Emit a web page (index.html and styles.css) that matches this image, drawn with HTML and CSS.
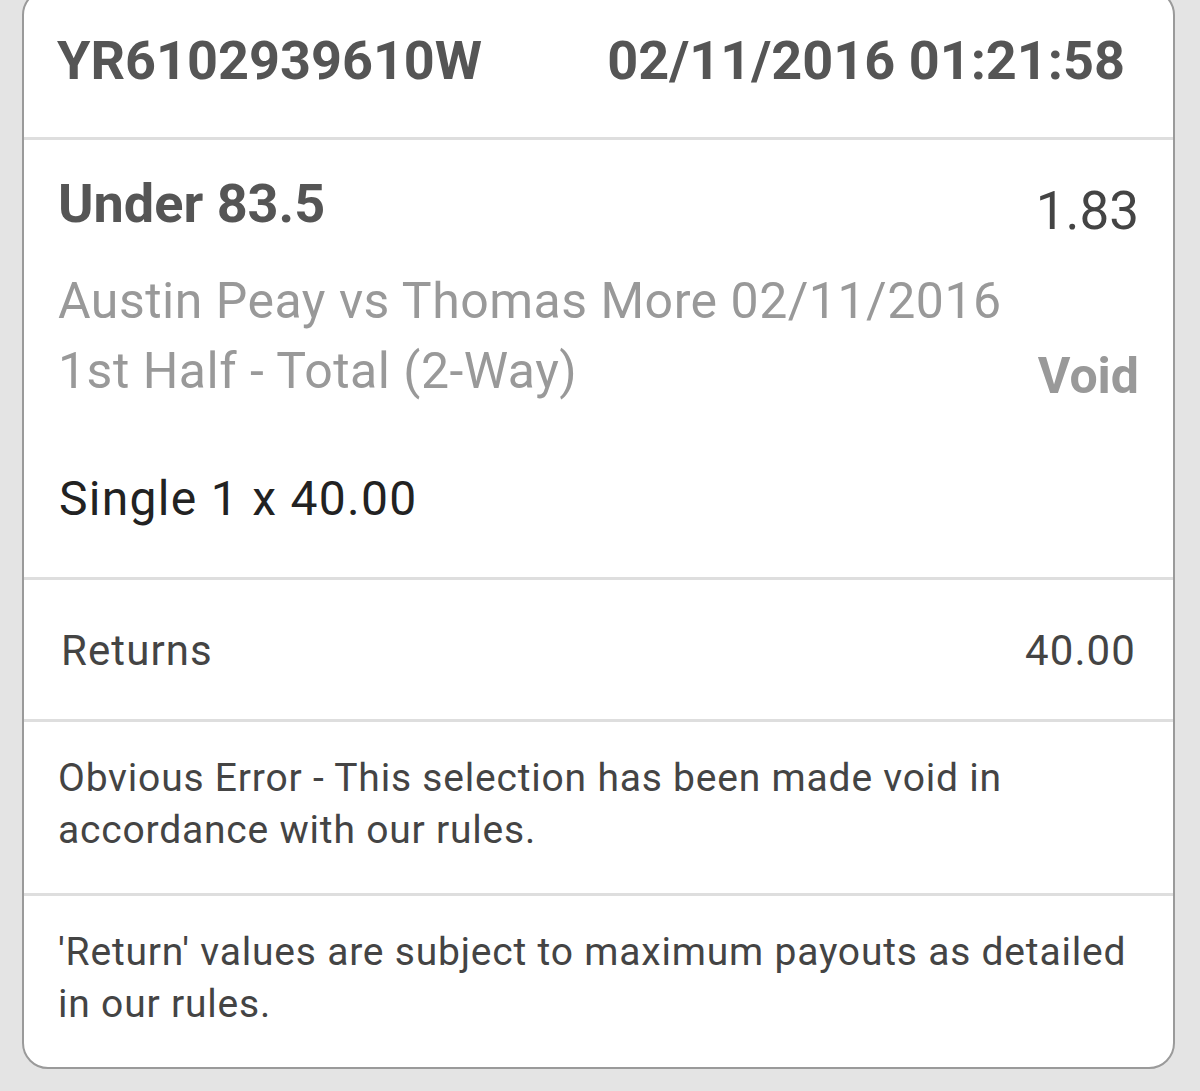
FILE: index.html
```html
<!DOCTYPE html>
<html lang="en">
<head>
<meta charset="UTF-8">
<meta name="viewport" content="width=device-width, initial-scale=1.0">
<title>Bet Receipt</title>
<link rel="stylesheet" href="styles.css">
</head>
<body>

<div class="receipt">
    <div class="receipt-head">
        <span class="bet-ref">YR6102939610W</span>
        <span class="bet-time">02/11/2016 01:21:58</span>
    </div>

    <div class="selection">
        <div class="selection-top">
            <span class="selection-name">Under 83.5</span>
            <span class="selection-odds">1.83</span>
        </div>
        <div class="selection-info">
            <div class="selection-event">
                Austin Peay vs Thomas More 02/11/2016<br>
                1st Half - Total (2-Way)
            </div>
            <span class="selection-status">Void</span>
        </div>
        <div class="stake">Single 1 x 40.00</div>
    </div>

    <div class="returns">
        <span>Returns</span>
        <span>40.00</span>
    </div>

    <div class="note">
        Obvious Error - This selection has been made void in accordance with our rules.
    </div>

    <div class="note">
        'Return' values are subject to maximum payouts as detailed in our rules.
    </div>
</div>

</body>
</html>
```

FILE: styles.css
```css
body {
    margin: 0;
    padding: 0 25px 0 22px;
    background-color: #e4e4e4;
    font-family: Roboto, "Noto Sans", Arial, sans-serif;
    color: #444;
    overflow: hidden;
}
.receipt {
    margin-top: -11px;
    background: #fff;
    border: 2px solid #9a9a9a;
    border-radius: 26px;
}
.receipt > div + div {
    border-top: 3px solid #dedede;
}

/* ticket number + placed time */
.receipt-head {
    display: flex;
    justify-content: space-between;
    padding: 40px 48px 46px 33px;
    font-size: 54px;
    line-height: 60px;
    font-weight: bold;
    color: #555;
}

.selection {
    padding: 32px 34px 48px 34px;
}
.selection-top {
    display: flex;
    justify-content: space-between;
    align-items: flex-start;
    line-height: 64px;
}
.selection-name {
    font-size: 54px;
    font-weight: bold;
    color: #555;
}
.selection-odds {
    margin: 7px 0 -7px;
    font-size: 53px;
    color: #444;
}
.selection-info {
    display: flex;
    justify-content: space-between;
    align-items: flex-end;
    margin-top: 30px;
}
.selection-event {
    font-size: 50px;
    line-height: 70px;
    letter-spacing: 0.5px;
    color: #999;
}
.selection-status {
    margin-bottom: -5px;
    font-size: 50px;
    line-height: 70px;
    font-weight: bold;
    color: #999;
}
.stake {
    margin: 63px 0 0 1px;
    font-size: 48px;
    line-height: 60px;
    letter-spacing: 1.3px;
    color: #222;
}

.returns {
    display: flex;
    justify-content: space-between;
    padding: 41px 37px 38px 37px;
    font-size: 42px;
    line-height: 60px;
    letter-spacing: 1.1px;
    color: #444;
}

.note {
    padding: 30px 20px 37px 34px;
    font-size: 39px;
    line-height: 52px;
    letter-spacing: 0.8px;
    color: #444;
}
```
